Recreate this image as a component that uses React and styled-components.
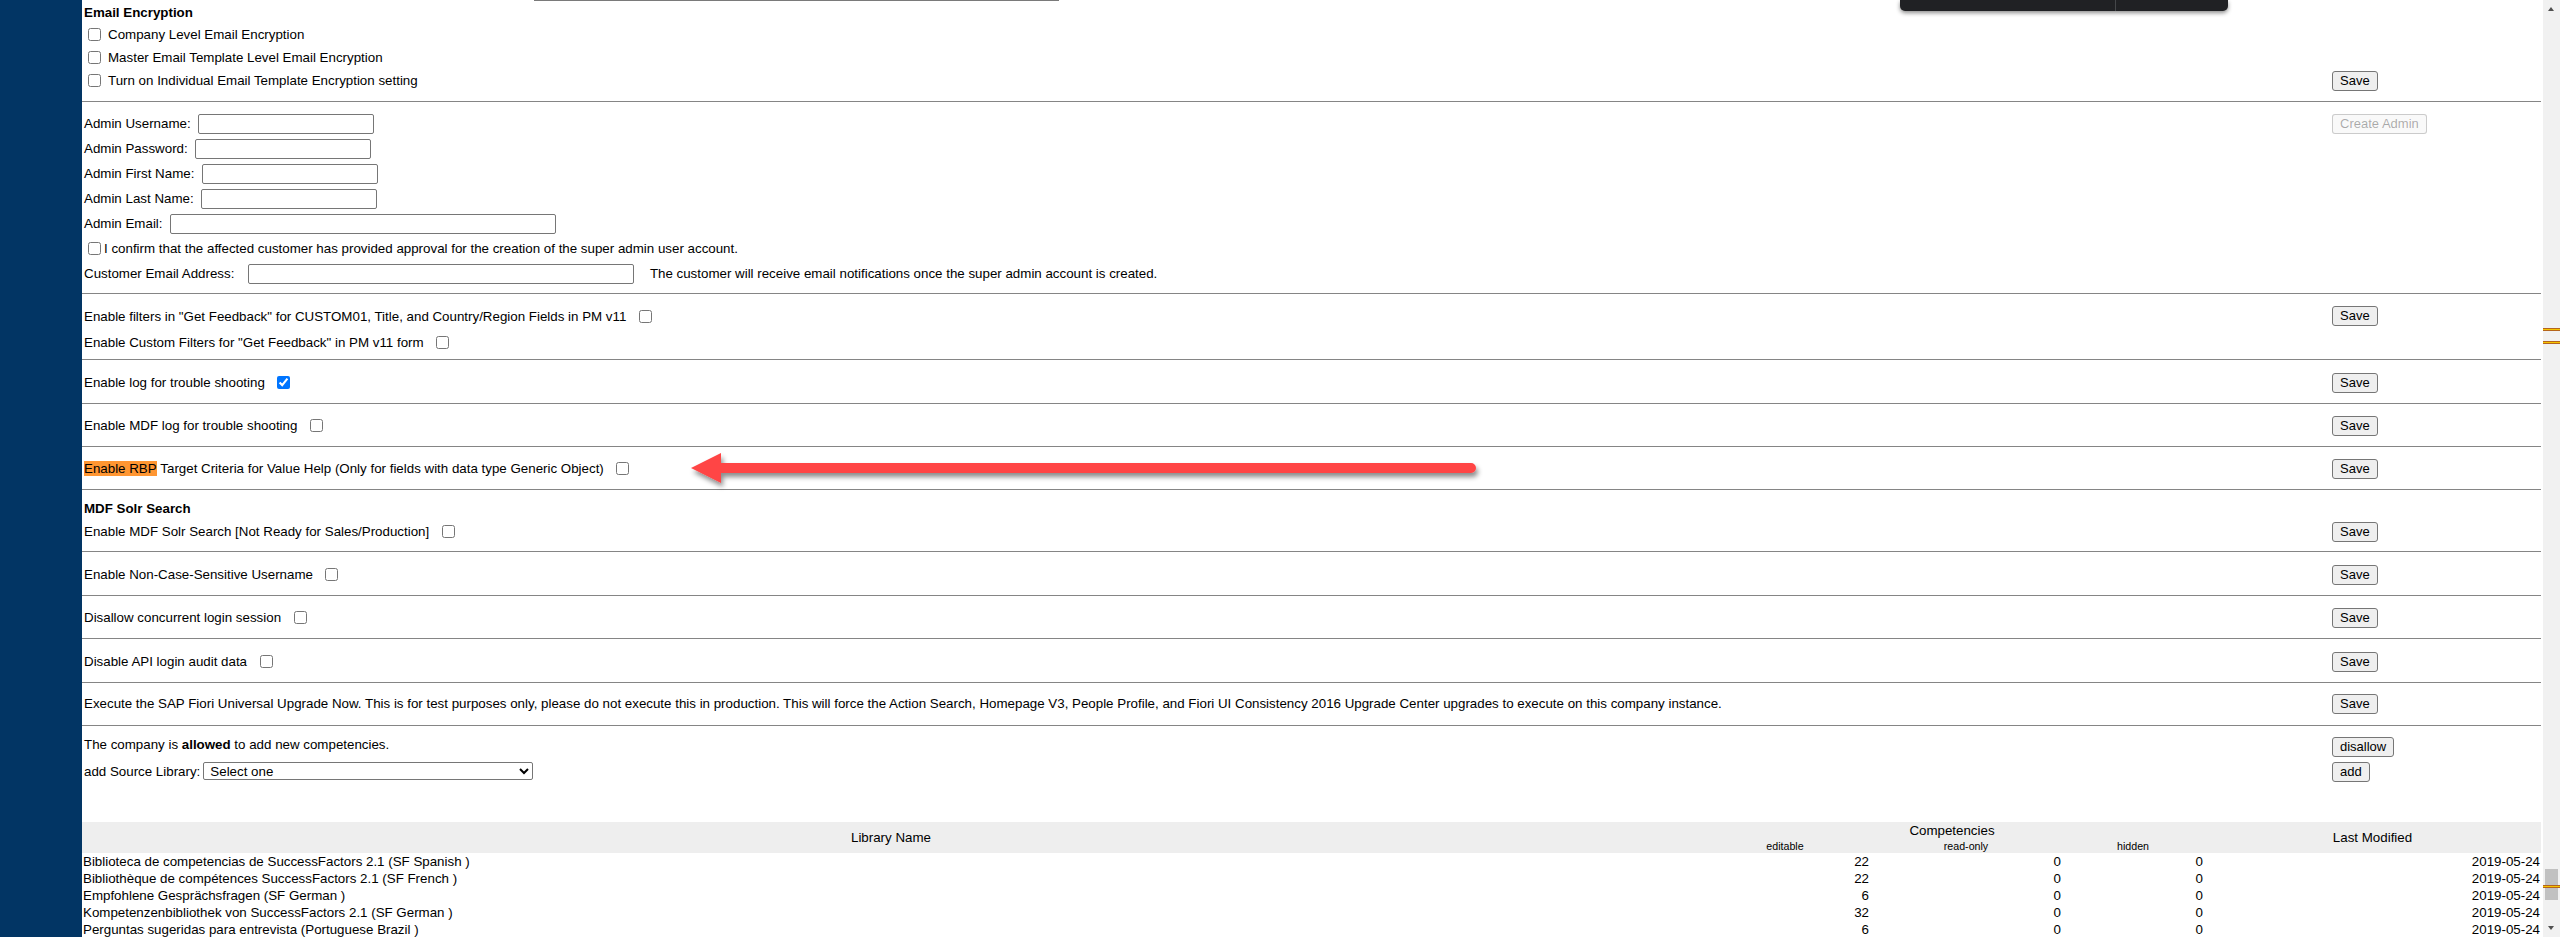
import React from 'react';
import styled, { createGlobalStyle } from 'styled-components';

const GlobalStyle = createGlobalStyle`
  html, body { margin: 0; padding: 0; overflow: hidden; background: #fff; }
  body { font-family: "Liberation Sans", Arial, sans-serif; font-size: 13.33px; color: #000; }
  #root { height: 937px; }
  * { box-sizing: border-box; }
`;

const Shell = styled.div`
  position: relative;
  display: flex;
  height: 937px;
  overflow: hidden;
`;

const Sidebar = styled.aside`
  width: 82px;
  flex: none;
  background: #023564;
`;

const Main = styled.main`
  flex: 1;
  min-width: 0;
  display: flex;
  flex-direction: column;
  padding-right: 2px;
  overflow: hidden;
`;

const Remnant = styled.div`
  flex: none;
  margin-left: 452px;
  width: 525px;
  height: 1px;
  background: #7a7a7a;
`;

const Section = styled.section`
  flex: none;
  padding: ${(p) => p.$pt}px 0 ${(p) => p.$pb}px;
  border-bottom: ${(p) => (p.$last ? 'none' : '1px solid #858585')};
`;

const Row = styled.div`
  display: grid;
  grid-template-columns: minmax(0, 1fr) 209px;
  align-items: ${(p) => p.$align || 'center'};
  height: ${(p) => p.$h}px;
`;

const Cell = styled.div`
  display: flex;
  align-items: center;
  padding-left: 2px;
  white-space: nowrap;
  line-height: 15px;
  margin-top: ${(p) => p.$mt || 0}px;
`;

const Heading = styled.b`
  font-weight: bold;
`;

const Check = styled.input.attrs({ type: 'checkbox' })`
  width: 13px;
  height: 13px;
  flex: none;
  margin: 0 ${(p) => p.$mr || 0}px 0 ${(p) => p.$ml || 0}px;
`;

const TextInput = styled.input.attrs({ type: 'text' })`
  width: ${(p) => p.$w}px;
  height: 20px;
  margin: 0 0 0 ${(p) => p.$ml}px;
  padding: 1px 2px;
  border: 1px solid #767676;
  border-radius: 2px;
  font: inherit;
  background: #fff;
`;

const Note = styled.span`
  margin-left: ${(p) => p.$ml || 0}px;
`;

const Button = styled.button`
  justify-self: start;
  height: 20px;
  padding: 0 7px;
  margin-top: ${(p) => p.$mt || 0}px;
  border: 1px solid #767676;
  border-radius: 3px;
  background: #efefef;
  color: #000;
  font-family: "Liberation Sans", Arial, sans-serif;
  font-size: 13px;
  line-height: 18px;
  white-space: nowrap;
  &:disabled {
    color: rgba(16, 16, 16, 0.35);
    border-color: rgba(118, 118, 118, 0.35);
    background: rgba(239, 239, 239, 0.4);
  }
`;

const Hit = styled.mark`
  background: #ff9632;
  color: #000;
`;

const Select = styled.select`
  width: 330px;
  height: 18px;
  margin-left: 3px;
  padding: 0 0 0 2px;
  border: 1px solid #767676;
  border-radius: 2px;
  background: #fff;
  font-family: "Liberation Sans", Arial, sans-serif;
  font-size: 13.33px;
`;

const Spacer = styled.div`
  flex: none;
  height: ${(p) => p.$h}px;
`;

const Table = styled.table`
  flex: none;
  width: 100%;
  border-collapse: collapse;
  table-layout: fixed;
  font-size: 13.33px;
`;

const Col = styled.col`
  width: ${(p) => (p.$w ? `${p.$w}px` : 'auto')};
`;

const HeadRow = styled.tr`
  background: #eeeeee;
`;

const Th = styled.th`
  padding: 0;
  height: ${(p) => p.$h}px;
  font-weight: normal;
  font-size: ${(p) => (p.$small ? '10.67px' : '13.33px')};
  line-height: ${(p) => (p.$small ? '12px' : '15px')};
  text-align: center;
  vertical-align: middle;
`;

const Td = styled.td`
  height: 17px;
  padding: 0 1px;
  line-height: 15px;
  white-space: nowrap;
  text-align: ${(p) => p.$align || 'left'};
`;

const Scrollbar = styled.div`
  position: relative;
  flex: none;
  width: 17px;
  background: #f1f1f1;
`;

const ArrowGlyph = styled.div`
  position: absolute;
  left: 5px;
  width: 0;
  height: 0;
  border-left: 3.5px solid transparent;
  border-right: 3.5px solid transparent;
  ${(p) =>
    p.$down
      ? 'bottom: 7px; border-top: 4px solid #505050;'
      : 'top: 7px; border-bottom: 4px solid #505050;'}
`;

const Thumb = styled.div`
  position: absolute;
  left: 2px;
  right: 2px;
  top: 869px;
  height: 31px;
  background: #c1c1c1;
`;

const Tick = styled.div`
  position: absolute;
  left: 0;
  right: 0;
  top: ${(p) => p.$y}px;
  height: 3px;
  background: #f5c400;
  border-top: 1px solid #b5651d;
  border-bottom: 1px solid #b5651d;
`;

const Toolbar = styled.div`
  position: absolute;
  left: 1900px;
  top: 0;
  width: 328px;
  height: 11px;
  background: #202124;
  border-radius: 0 0 5px 5px;
  box-shadow: 0 2px 4px rgba(0, 0, 0, 0.45);
`;

const ToolbarDivider = styled.div`
  position: absolute;
  left: 215px;
  top: 0;
  width: 1px;
  height: 11px;
  background: #45474a;
`;

const ArrowOverlay = styled.svg`
  position: absolute;
  left: 680px;
  top: 446px;
  overflow: visible;
`;

const libraries = [
  ['Biblioteca de competencias de SuccessFactors 2.1 (SF Spanish )', 22],
  ['Bibliothèque de compétences SuccessFactors 2.1 (SF French )', 22],
  ['Empfohlene Gesprächsfragen (SF German )', 6],
  ['Kompetenzenbibliothek von SuccessFactors 2.1 (SF German )', 32],
  ['Perguntas sugeridas para entrevista (Portuguese Brazil )', 6],
];

const toggles = [
  { label: 'Enable log for trouble shooting', checked: true, pt: 11, pb: 9 },
  { label: 'Enable MDF log for trouble shooting', pt: 10, pb: 9 },
];

const laterToggles = [
  { label: 'Enable Non-Case-Sensitive Username', pt: 11, pb: 9 },
  { label: 'Disallow concurrent login session', pt: 10, pb: 9 },
  { label: 'Disable API login audit data', pt: 11, pb: 9 },
];

function ToggleSection({ label, checked, pt, pb }) {
  return (
    <Section $pt={pt} $pb={pb}>
      <Row $h={23}>
        <Cell>
          {label}
          <Check $ml={12.5} defaultChecked={!!checked} />
        </Cell>
        <Button>Save</Button>
      </Row>
    </Section>
  );
}

export default function App() {
  return (
    <>
      <GlobalStyle />
      <Shell>
        <Sidebar />
        <Main>
          <Remnant />
          <Section $pt={0} $pb={9}>
            <Row $h={22}>
              <Cell>
                <Heading>Email Encryption</Heading>
              </Cell>
            </Row>
            <Row $h={23}>
              <Cell>
                <Check $ml={4} $mr={7} />
                Company Level Email Encryption
              </Cell>
            </Row>
            <Row $h={23}>
              <Cell>
                <Check $ml={4} $mr={7} />
                Master Email Template Level Email Encryption
              </Cell>
            </Row>
            <Row $h={23}>
              <Cell>
                <Check $ml={4} $mr={7} />
                Turn on Individual Email Template Encryption setting
              </Cell>
              <Button>Save</Button>
            </Row>
          </Section>

          <Section $pt={9} $pb={7}>
            <Row $h={25}>
              <Cell>
                Admin Username:
                <TextInput $w={176} $ml={7.5} />
              </Cell>
              <Button disabled>Create Admin</Button>
            </Row>
            <Row $h={25}>
              <Cell>
                Admin Password:
                <TextInput $w={176} $ml={7.5} />
              </Cell>
            </Row>
            <Row $h={25}>
              <Cell>
                Admin First Name:
                <TextInput $w={176} $ml={7.5} />
              </Cell>
            </Row>
            <Row $h={25}>
              <Cell>
                Admin Last Name:
                <TextInput $w={176} $ml={7.5} />
              </Cell>
            </Row>
            <Row $h={25}>
              <Cell>
                Admin Email:
                <TextInput $w={386} $ml={7.5} />
              </Cell>
            </Row>
            <Row $h={25}>
              <Cell>
                <Check $ml={4} $mr={3} />
                I confirm that the affected customer has provided approval for the creation of the super admin user account.
              </Cell>
            </Row>
            <Row $h={25}>
              <Cell>
                Customer Email Address:
                <TextInput $w={386} $ml={13.5} />
                <Note $ml={16}>
                  The customer will receive email notifications once the super admin account is created.
                </Note>
              </Cell>
            </Row>
          </Section>

          <Section $pt={9} $pb={4}>
            <Row $h={26}>
              <Cell>
                Enable filters in "Get Feedback" for CUSTOM01, Title, and Country/Region Fields in PM v11
                <Check $ml={12.5} />
              </Cell>
              <Button>Save</Button>
            </Row>
            <Row $h={26}>
              <Cell>
                Enable Custom Filters for "Get Feedback" in PM v11 form
                <Check $ml={12.5} />
              </Cell>
            </Row>
          </Section>

          {toggles.map((t) => (
            <ToggleSection key={t.label} {...t} />
          ))}

          <Section $pt={10} $pb={9}>
            <Row $h={23}>
              <Cell>
                <Hit>Enable RBP</Hit>&nbsp;Target Criteria for Value Help (Only for fields with data type Generic Object)
                <Check $ml={12.5} />
              </Cell>
              <Button>Save</Button>
            </Row>
          </Section>

          <Section $pt={7} $pb={8}>
            <Row $h={23}>
              <Cell>
                <Heading>MDF Solr Search</Heading>
              </Cell>
            </Row>
            <Row $h={23}>
              <Cell>
                Enable MDF Solr Search [Not Ready for Sales/Production]
                <Check $ml={12.5} />
              </Cell>
              <Button>Save</Button>
            </Row>
          </Section>

          {laterToggles.map((t) => (
            <ToggleSection key={t.label} {...t} />
          ))}

          <Section $pt={9} $pb={10}>
            <Row $h={23}>
              <Cell>
                Execute the SAP Fiori Universal Upgrade Now. This is for test purposes only, please do not execute this in production. This will force the Action Search, Homepage V3, People Profile, and Fiori UI Consistency 2016 Upgrade Center upgrades to execute on this company instance.
              </Cell>
              <Button>Save</Button>
            </Row>
          </Section>

          <Section $pt={9} $pb={0} $last>
            <Row $h={25} $align="start">
              <Cell $mt={2}>
                The company is&nbsp;<b>allowed</b>&nbsp;to add new competencies.
              </Cell>
              <Button $mt={2}>disallow</Button>
            </Row>
            <Row $h={25} $align="start">
              <Cell $mt={2}>
                add Source Library:
                <Select defaultValue="">
                  <option value="">Select one</option>
                </Select>
              </Cell>
              <Button $mt={2}>add</Button>
            </Row>
          </Section>

          <Spacer $h={37} />

          <Table>
            <colgroup>
              <Col />
              <Col $w={170} />
              <Col $w={192} />
              <Col $w={142} />
              <Col $w={337} />
            </colgroup>
            <thead>
              <HeadRow>
                <Th $h={17} rowSpan={2}>Library Name</Th>
                <Th $h={17} colSpan={3}>Competencies</Th>
                <Th $h={17} rowSpan={2}>Last Modified</Th>
              </HeadRow>
              <HeadRow>
                <Th $h={14} $small>editable</Th>
                <Th $h={14} $small>read-only</Th>
                <Th $h={14} $small>hidden</Th>
              </HeadRow>
            </thead>
            <tbody>
              {libraries.map(([name, editable]) => (
                <tr key={name}>
                  <Td>{name}</Td>
                  <Td $align="right">{editable}</Td>
                  <Td $align="right">0</Td>
                  <Td $align="right">0</Td>
                  <Td $align="right">2019-05-24</Td>
                </tr>
              ))}
            </tbody>
          </Table>
        </Main>

        <Scrollbar>
          <ArrowGlyph />
          <Tick $y={328} />
          <Tick $y={341} />
          <Thumb />
          <Tick $y={885} />
          <ArrowGlyph $down />
        </Scrollbar>

        <Toolbar>
          <ToolbarDivider />
        </Toolbar>

        <ArrowOverlay width="810" height="44" viewBox="0 0 810 44">
          <defs>
            <filter id="arrowShadow" x="-10%" y="-50%" width="120%" height="220%">
              <feDropShadow dx="2" dy="4" stdDeviation="2.5" floodColor="#000" floodOpacity="0.45" />
            </filter>
          </defs>
          <path
            d="M11 22 L41 7 L41 17 L791 17 A5 5 0 0 1 791 27 L41 27 L41 37 Z"
            fill="#ff4545"
            filter="url(#arrowShadow)"
          />
        </ArrowOverlay>
      </Shell>
    </>
  );
}
